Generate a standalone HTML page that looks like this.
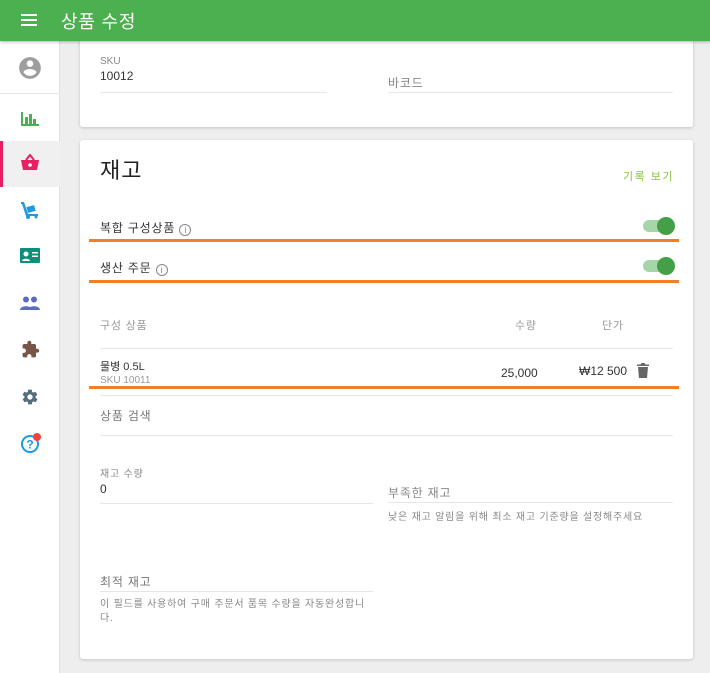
<!DOCTYPE html>
<html><head><meta charset="utf-8"><style>
*{margin:0;padding:0;box-sizing:border-box}
body{width:710px;height:673px;overflow:hidden;background:#eeeeee;font-family:"Liberation Sans","Noto Sans CJK KR",sans-serif;position:relative;color:#222}
.a{position:absolute;white-space:nowrap}
.hdr{left:0;top:0;width:710px;height:41px;background:#4caf50;box-shadow:0 1px 3px rgba(0,0,0,.3);z-index:3}
.side{left:0;top:41px;width:60px;height:632px;background:#fff;border-right:1px solid #e0e0e0}
.card{background:#fff;border-radius:3px;box-shadow:0 1px 3px rgba(0,0,0,.18)}
.ln{height:1px;background:#e6e6e6}
.or{height:3px;background:#f07f2a;left:89px;width:590px}
.lbl{font-size:10px;color:#888}
.t12{font-size:12px;color:#333}
.g{color:#888}
.ls{letter-spacing:0.8px}
.tog{width:30px;height:12px;border-radius:6px;background:#a5d6a7}
.tog::after{content:"";position:absolute;right:-2px;top:-3px;width:18px;height:18px;border-radius:50%;background:#43a047}
</style></head><body>
<div class="a hdr">
 <svg class="a" style="left:21px;top:14px" width="16" height="12"><rect y="0" width="16" height="2" fill="#fff"/><rect y="5" width="16" height="2" fill="#fff"/><rect y="10" width="16" height="2" fill="#fff"/></svg>
 <div class="a ls" style="left:61px;top:8px;font-size:18px;color:#fff">상품 수정</div>
</div>
<div class="a side">
 <svg class="a" style="left:17px;top:14px" width="26" height="26" viewBox="0 0 24 24"><path fill="#9e9e9e" d="M12 2C6.5 2 2 6.5 2 12s4.5 10 10 10 10-4.5 10-10S17.5 2 12 2zm0 3c1.7 0 3 1.3 3 3s-1.3 3-3 3-3-1.3-3-3 1.3-3 3-3zm0 14.2c-2.5 0-4.7-1.3-6-3.2 0-2 4-3.1 6-3.1s6 1.1 6 3.1c-1.3 1.9-3.5 3.2-6 3.2z"/></svg>
 <div class="a ln" style="left:0;top:52px;width:60px"></div>
 <svg class="a" style="left:21px;top:69px" width="18" height="16" viewBox="0 0 18 16"><g fill="#4caf50"><rect x="0" y="2" width="2" height="14"/><rect x="4" y="7" width="3" height="9"/><rect x="8" y="4" width="3" height="12"/><rect x="12" y="9" width="3" height="7"/><rect x="0" y="14" width="18" height="2"/></g></svg>
 <div class="a" style="left:0;top:100px;width:60px;height:46px;background:#f0f0f0"></div>
 <div class="a" style="left:0;top:100px;width:3px;height:46px;background:#e91e63"></div>
 <svg class="a" style="left:20px;top:113px" width="20" height="18" viewBox="0 0 20 18"><path fill="#e91e63" d="M1 6h18l-2 10H3z"/><path d="M6 6l4-5 4 5" stroke="#e91e63" stroke-width="2" fill="none"/><circle cx="10" cy="11" r="1.8" fill="#fff"/></svg>
 <svg class="a" style="left:20px;top:159px" width="20" height="20" viewBox="0 0 20 20"><g fill="#1e9be0"><path d="M1 2h3l4 12h10v2H6L2 4H1z"/><rect x="7" y="6" width="8" height="6" transform="rotate(-15 11 9)"/><circle cx="8" cy="17" r="2"/><circle cx="16" cy="17" r="1.5"/></g></svg>
 <svg class="a" style="left:20px;top:207px" width="20" height="16" viewBox="0 0 20 16"><rect width="20" height="15" rx="1" fill="#0f8f7a"/><circle cx="6" cy="6" r="2.5" fill="#fff"/><path d="M2 13c0-3 8-3 8 0z" fill="#fff"/><rect x="12" y="4" width="6" height="1.5" fill="#fff"/><rect x="12" y="7.5" width="6" height="1.5" fill="#fff"/></svg>
 <svg class="a" style="left:20px;top:255px" width="20" height="14" viewBox="0 0 20 14"><g fill="#5c6bc0"><circle cx="6" cy="3.5" r="3"/><circle cx="14" cy="3.5" r="3"/><path d="M0 14c0-5 12-5 12 0z"/><path d="M8 14c0-5 12-5 12 0z"/></g></svg>
 <svg class="a" style="left:21px;top:299px" width="19" height="19" viewBox="0 0 24 24"><path fill="#795548" d="M20.5 11H19V7c0-1.1-.9-2-2-2h-4V3.5C13 2.1 11.9 1 10.5 1S8 2.1 8 3.5V5H4c-1.1 0-2 .9-2 2v3.8h1.5c1.5 0 2.7 1.2 2.7 2.7S5 16.2 3.5 16.2H2V20c0 1.1.9 2 2 2h3.8v-1.5c0-1.5 1.2-2.7 2.7-2.7s2.7 1.2 2.7 2.7V22H17c1.1 0 2-.9 2-2v-4h1.5c1.4 0 2.5-1.1 2.5-2.5S21.9 11 20.5 11z"/></svg>
 <svg class="a" style="left:21px;top:347px" width="18" height="18" viewBox="0 0 24 24"><path fill="#546e7a" d="M19.4 13c0-.3.1-.6.1-1s0-.7-.1-1l2.1-1.6c.2-.2.2-.4.1-.6l-2-3.5c-.1-.2-.4-.3-.6-.2l-2.5 1c-.5-.4-1.1-.7-1.700-1l-.4-2.6c0-.2-.2-.4-.5-.4h-4c-.2 0-.5.2-.5.4l-.4 2.6c-.6.3-1.2.6-1.7 1l-2.5-1c-.2-.1-.5 0-.6.2l-2 3.5c-.1.2-.1.5.1.6L4.6 11c0 .3-.1.6-.1 1s0 .7.1 1l-2.1 1.6c-.2.2-.2.4-.1.6l2 3.5c.1.2.4.3.6.2l2.5-1c.5.4 1.1.7 1.7 1l.4 2.6c0 .2.2.4.5.4h4c.2 0 .5-.2.5-.4l.4-2.6c.6-.3 1.2-.6 1.7-1l2.5 1c.2.1.5 0 .6-.2l2-3.5c.1-.2.1-.5-.1-.6zM12 15.5c-1.9 0-3.5-1.6-3.5-3.5s1.6-3.5 3.5-3.5 3.5 1.6 3.5 3.5-1.6 3.5-3.5 3.5z"/></svg>
 <svg class="a" style="left:20px;top:390px" width="24" height="24" viewBox="0 0 24 24"><circle cx="10" cy="13" r="8" fill="none" stroke="#1e9be0" stroke-width="2"/><text x="10" y="17.5" text-anchor="middle" font-size="12" font-weight="bold" fill="#1e9be0" font-family="Liberation Sans">?</text><circle cx="17" cy="6" r="4" fill="#f44336"/></svg>
</div>

<div class="a card" style="left:80px;top:30px;width:613px;height:97px"></div>
<div class="a lbl" style="left:100px;top:56px">SKU</div>
<div class="a t12" style="left:100px;top:69px">10012</div>
<div class="a ln" style="left:100px;top:92px;width:227px"></div>
<div class="a g ls" style="left:388px;top:74px;font-size:12px">바코드</div>
<div class="a ln" style="left:388px;top:92px;width:285px"></div>

<div class="a card" style="left:80px;top:140px;width:613px;height:519px"></div>
<div class="a" style="left:100px;top:153px;font-size:22px;color:#222;letter-spacing:1px">재고</div>
<div class="a" style="left:623px;top:168px;font-size:11px;color:#8bc34a;letter-spacing:1.5px">기록 보기</div>

<div class="a t12 ls" style="left:100px;top:219px">복합 구성상품 <span style="display:inline-block;width:12px;height:12px;border:1px solid #888;border-radius:50%;font-size:9px;line-height:10px;text-align:center;color:#888;vertical-align:-1px;letter-spacing:0">i</span></div>
<div class="a tog" style="left:643px;top:220px"></div>
<div class="a or" style="top:239px"></div>
<div class="a t12 ls" style="left:100px;top:259px">생산 주문 <span style="display:inline-block;width:12px;height:12px;border:1px solid #888;border-radius:50%;font-size:9px;line-height:10px;text-align:center;color:#888;vertical-align:-1px;letter-spacing:0">i</span></div>
<div class="a tog" style="left:643px;top:260px"></div>
<div class="a or" style="top:280px"></div>

<div class="a g ls" style="left:100px;top:317px;font-size:11px;color:#999">구성 상품</div>
<div class="a g ls" style="left:515px;top:317px;font-size:11px;color:#999">수량</div>
<div class="a g ls" style="left:602px;top:317px;font-size:11px;color:#999">단가</div>
<div class="a ln" style="left:100px;top:348px;width:573px"></div>
<div class="a t12" style="left:100px;top:358px;font-size:11px">물병 0.5L</div>
<div class="a" style="left:100px;top:375px;font-size:10px;color:#999">SKU 10011</div>
<div class="a t12" style="left:501px;top:366px">25,000</div>
<div class="a t12" style="left:579px;top:364px">₩12 500</div>
<svg class="a" style="left:637px;top:363px" width="12" height="15" viewBox="0 0 12 15"><path fill="#666" d="M1 4h10l-1 11H2zM0 1.5h3.5L4.5 0h3l1 1.5H12V3H0z"/></svg>
<div class="a or" style="top:386px"></div>
<div class="a ln" style="left:100px;top:395px;width:573px"></div>
<div class="a ls" style="left:100px;top:407px;font-size:12px;color:#777">상품 검색</div>
<div class="a ln" style="left:100px;top:435px;width:573px"></div>

<div class="a lbl ls" style="left:100px;top:465px">재고 수량</div>
<div class="a t12" style="left:100px;top:482px">0</div>
<div class="a ln" style="left:100px;top:503px;width:273px"></div>
<div class="a ls" style="left:388px;top:484px;font-size:12px;color:#888">부족한 재고</div>
<div class="a ln" style="left:388px;top:502px;width:285px"></div>
<div class="a ls" style="left:388px;top:508px;font-size:10px;color:#888">낮은 재고 알림을 위해 최소 재고 기준량을 설정해주세요</div>

<div class="a ls" style="left:100px;top:573px;font-size:12px;color:#777">최적 재고</div>
<div class="a ln" style="left:100px;top:591px;width:273px"></div>
<div class="a ls" style="left:100px;top:598px;font-size:10px;color:#888;line-height:14px;white-space:normal;width:278px;word-break:break-all">이 필드를 사용하여 구매 주문서 품목 수량을 자동완성합니다.</div>
</body></html>
